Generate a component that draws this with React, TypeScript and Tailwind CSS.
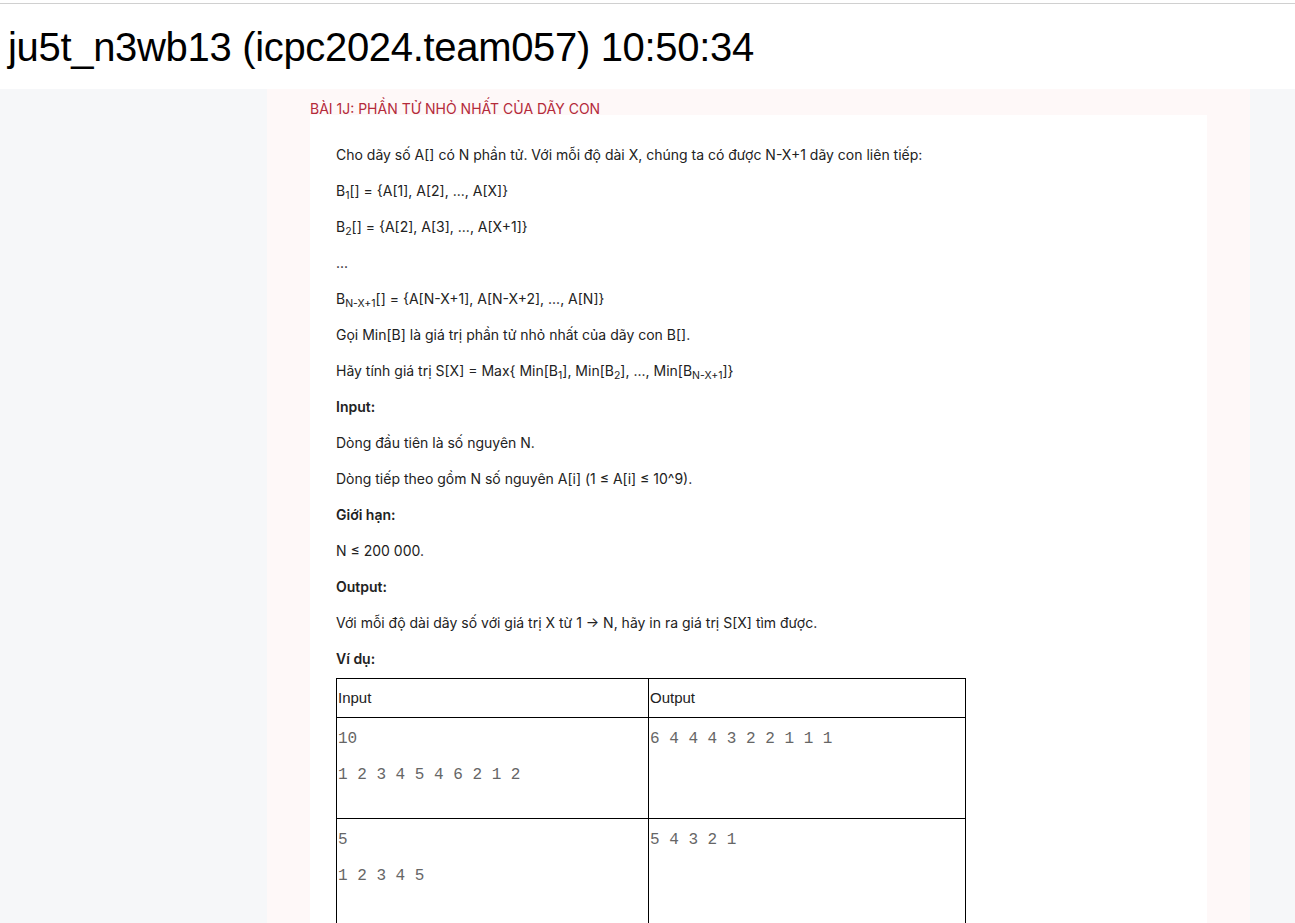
import React from 'react';

const paragraphs: React.ReactNode[] = [
  <>Cho dãy số A[] có N phần tử. Với mỗi độ dài X, chúng ta có được N-X+1 dãy con liên tiếp:</>,
  <>B<sub>1</sub>[] = {'{'}A[1], A[2], ..., A[X]{'}'}</>,
  <>B<sub>2</sub>[] = {'{'}A[2], A[3], ..., A[X+1]{'}'}</>,
  <>...</>,
  <>B<sub>N-X+1</sub>[] = {'{'}A[N-X+1], A[N-X+2], ..., A[N]{'}'}</>,
  <>Gọi Min[B] là giá trị phần tử nhỏ nhất của dãy con B[].</>,
  <>Hãy tính giá trị S[X] = Max{'{'} Min[B<sub>1</sub>], Min[B<sub>2</sub>], ..., Min[B<sub>N-X+1</sub>]{'}'}</>,
  <b className="font-semibold">Input:</b>,
  <>Dòng đầu tiên là số nguyên N.</>,
  <>Dòng tiếp theo gồm N số nguyên A[i] (1 ≤ A[i] ≤ 10^9).</>,
  <b className="font-semibold">Giới hạn:</b>,
  <>N ≤ 200 000.</>,
  <b className="font-semibold">Output:</b>,
  <>Với mỗi độ dài dãy số với giá trị X từ 1 → N, hãy in ra giá trị S[X] tìm được.</>,
];

const samples = [
  { input: ['10', '1 2 3 4 5 4 6 2 1 2'], output: ['6 4 4 4 3 2 2 1 1 1'], h: 'h-[101px]' },
  { input: ['5', '1 2 3 4 5'], output: ['5 4 3 2 1'], h: 'h-[120px]' },
];

function Cell({ lines }: { lines: string[] }) {
  return (
    <td className="border border-black align-top px-[1px] pt-[11px] pb-[16px]">
      {lines.map((l, i) => (
        <p key={i} className="mb-4 leading-5 text-[16px] text-[#666] whitespace-pre font-['Liberation_Mono',monospace]">
          {l}
        </p>
      ))}
    </td>
  );
}

export default function App() {
  return (
    <div className="min-h-screen bg-[#f6f7f9] font-['Inter',sans-serif]">
      {/* thanh tiêu đề */}
      <div className="bg-white mt-[3px] border-t border-[#d0d0d0] pt-[19px] pb-[18px] px-2">
        <h1 className="text-[40px] leading-[48px] text-black font-['Liberation_Sans',Arial,sans-serif] tracking-[-0.32px]">
          ju5t_n3wb13 (icpc2024.team057) 10:50:34
        </h1>
      </div>

      <div className="ml-[267px] mr-[45px] bg-[#fef8f8] pt-[13px] px-[43px] min-h-[834px]">
        <div className="text-[14px] leading-[14px] h-[13px] text-[#b42a3a]">BÀI 1J: PHẦN TỬ NHỎ NHẤT CỦA DÃY CON</div>
        <div className="bg-white pt-[30px] px-[26px] pb-10 text-[14px] text-[#222]">
          {paragraphs.map((p, i) => (
            <p key={i} className="mb-4 leading-5">
              {p}
            </p>
          ))}
          <p className="mb-[9px] leading-5">
            <b className="font-semibold">Ví dụ:</b>
          </p>

          <table className="w-[630px] border-collapse border border-black">
            <tbody>
              <tr className="h-[39px] text-[15px] text-[#222] font-['Liberation_Sans',Arial,sans-serif]">
                <td className="w-[312px] border border-black px-[1px] align-middle">Input</td>
                <td className="border border-black px-[1px] align-middle">Output</td>
              </tr>
              {samples.map((s, i) => (
                <tr key={i} className={s.h}>
                  <Cell lines={s.input} />
                  <Cell lines={s.output} />
                </tr>
              ))}
            </tbody>
          </table>
        </div>
      </div>
    </div>
  );
}
